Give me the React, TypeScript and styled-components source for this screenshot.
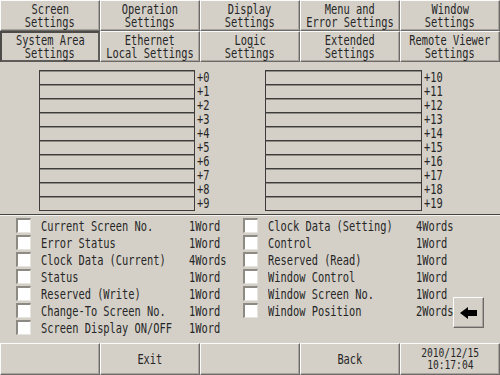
import styled, { createGlobalStyle, css } from "styled-components";

const GlobalStyle = createGlobalStyle`
  html, body {
    margin: 0;
    padding: 0;
    background: #d4d0c8;
  }
  body {
    font-family: "DejaVu Sans Mono", "Liberation Mono", monospace;
    color: #262626;
  }
`;

const Screen = styled.div`
  width: 500px;
  height: 375px;
  display: flex;
  flex-direction: column;
  background: #d4d0c8;
  overflow: hidden;
`;

// the panel font is a tall narrow bitmap face, so squeeze a mono font
const Narrow = styled.span<{ $origin?: string; $size?: number }>`
  display: inline-block;
  font-size: ${(p) => p.$size ?? 14}px;
  white-space: nowrap;
  transform: scaleX(0.74);
  transform-origin: ${(p) => p.$origin ?? "left"} center;
`;

const raised = css`
  box-sizing: border-box;
  border: 1px solid;
  border-color: #fbfbfb #6c6a66 #6c6a66 #fbfbfb;
  box-shadow: inset -1px -1px 0 #a9a59e;
`;

const TabGrid = styled.nav`
  display: grid;
  grid-template-columns: repeat(5, 100px);
  grid-auto-rows: 31px;
`;

const Tab = styled.div<{ $active?: boolean }>`
  ${raised}
  display: flex;
  flex-direction: column;
  align-items: center;
  justify-content: center;
  line-height: 13px;
  ${(p) =>
    p.$active &&
    css`
      border: 2px solid;
      border-color: #4c4b48 #5e5c58 #5e5c58 #4c4b48;
      box-shadow: none;
    `}
`;

const Registers = styled.section`
  display: flex;
  padding: 8px 0 0 39px;
`;

const RegisterBlock = styled.div`
  display: flex;
`;

const RegisterBox = styled.div<{ $width: number }>`
  width: ${(p) => p.$width}px;
  border-bottom: 1px solid #3d3c3a;
`;

const Cell = styled.div`
  box-sizing: border-box;
  height: 14px;
  border: 1px solid #3d3c3a;
  border-bottom: none;
  box-shadow: inset 0 1px 0 #8f8c86;
`;

const Offsets = styled.div`
  width: 70px;
  display: flex;
  flex-direction: column;
`;

const Offset = styled.div`
  height: 14px;
  line-height: 14px;
  padding-left: 2px;
`;

const Divider = styled.hr`
  margin: 3px 0 0;
  height: 0;
  border: none;
  border-top: 1px solid #46453f;
  border-bottom: 1px solid #f4f3f0;
`;

const Checklist = styled.section`
  display: flex;
  padding-top: 1px;
`;

const CheckColumn = styled.div<{ $count: number; $pad: number }>`
  display: grid;
  grid-template-columns: 15px 138px ${(p) => p.$count}px;
  grid-auto-rows: 17px;
  column-gap: 10px;
  align-items: center;
  padding-left: ${(p) => p.$pad}px;
  line-height: 17px;
`;

const CheckBox = styled.div`
  box-sizing: border-box;
  width: 15px;
  height: 15px;
  background: #fff;
  border-top: 2px solid #8d8983;
  border-left: 2px solid #8d8983;
  border-right: 1px solid #e6e4df;
  border-bottom: 1px solid #e6e4df;
`;

const Field = styled.div`
  min-width: 0;
  overflow: visible;
`;

const ArrowButton = styled.button`
  ${raised}
  width: 31px;
  height: 31px;
  margin-top: 80px;
  padding: 0;
  background: #d4d0c8;
  display: flex;
  align-items: center;
  justify-content: center;
`;

const BottomBar = styled.footer`
  margin-top: auto;
  display: grid;
  grid-template-columns: repeat(5, 100px);
  height: 32px;
`;

const BarButton = styled.div<{ $lh?: number }>`
  ${raised}
  display: flex;
  flex-direction: column;
  align-items: center;
  justify-content: center;
  line-height: ${(p) => p.$lh ?? 14}px;
`;

const tabs: [string, string][] = [
  ["Screen", "Settings"],
  ["Operation", "Settings"],
  ["Display", "Settings"],
  ["Menu and", "Error Settings"],
  ["Window", "Settings"],
  ["System Area", "Settings"],
  ["Ethernet", "Local Settings"],
  ["Logic", "Settings"],
  ["Extended", "Settings"],
  ["Remote Viewer", "Settings"],
];

const leftItems: [string, string][] = [
  ["Current Screen No.", "1Word"],
  ["Error Status", "1Word"],
  ["Clock Data (Current)", "4Words"],
  ["Status", "1Word"],
  ["Reserved (Write)", "1Word"],
  ["Change-To Screen No.", "1Word"],
  ["Screen Display ON/OFF", "1Word"],
];

const rightItems: [string, string][] = [
  ["Clock Data (Setting)", "4Words"],
  ["Control", "1Word"],
  ["Reserved (Read)", "1Word"],
  ["Window Control", "1Word"],
  ["Window Screen No.", "1Word"],
  ["Window Position", "2Words"],
];

const Register = ({ start, width }: { start: number; width: number }) => {
  const rows = Array.from({ length: 10 }, (_, i) => start + i);
  return (
    <RegisterBlock>
      <RegisterBox $width={width}>
        {rows.map((n) => (
          <Cell key={n} />
        ))}
      </RegisterBox>
      <Offsets>
        {rows.map((n) => (
          <Offset key={n}>
            <Narrow>+{n}</Narrow>
          </Offset>
        ))}
      </Offsets>
    </RegisterBlock>
  );
};

const Items = ({ items, pad, count }: { items: [string, string][]; pad: number; count: number }) => (
  <CheckColumn $pad={pad} $count={count}>
    {items.flatMap(([label, size]) => [
      <CheckBox key={label + "b"} />,
      <Field key={label + "l"}>
        <Narrow>{label}</Narrow>
      </Field>,
      <Field key={label + "s"}>
        <Narrow>{size}</Narrow>
      </Field>,
    ])}
  </CheckColumn>
);

export default function App() {
  return (
    <Screen>
      <GlobalStyle />
      <TabGrid>
        {tabs.map(([a, b], i) => (
          <Tab key={a} $active={i === 5}>
            <Narrow $origin="center">{a}</Narrow>
            <Narrow $origin="center">{b}</Narrow>
          </Tab>
        ))}
      </TabGrid>

      <Registers>
        <Register start={0} width={156} />
        <Register start={10} width={157} />
      </Registers>

      <Divider />

      <Checklist>
        <Items items={leftItems} pad={16} count={54} />
        <Items items={rightItems} pad={0} count={37} />
        <ArrowButton aria-label="back">
          <svg width="17" height="12" viewBox="0 0 17 12">
            <polygon points="0,6 8,0 8,3 17,3 17,9 8,9 8,12" fill="#000" />
          </svg>
        </ArrowButton>
      </Checklist>

      <BottomBar>
        <BarButton />
        <BarButton>
          <Narrow $origin="center">Exit</Narrow>
        </BarButton>
        <BarButton />
        <BarButton>
          <Narrow $origin="center">Back</Narrow>
        </BarButton>
        <BarButton $lh={12}>
          <Narrow $origin="center" $size={13}>2010/12/15</Narrow>
          <Narrow $origin="center" $size={13}>10:17:04</Narrow>
        </BarButton>
      </BottomBar>
    </Screen>
  );
}
